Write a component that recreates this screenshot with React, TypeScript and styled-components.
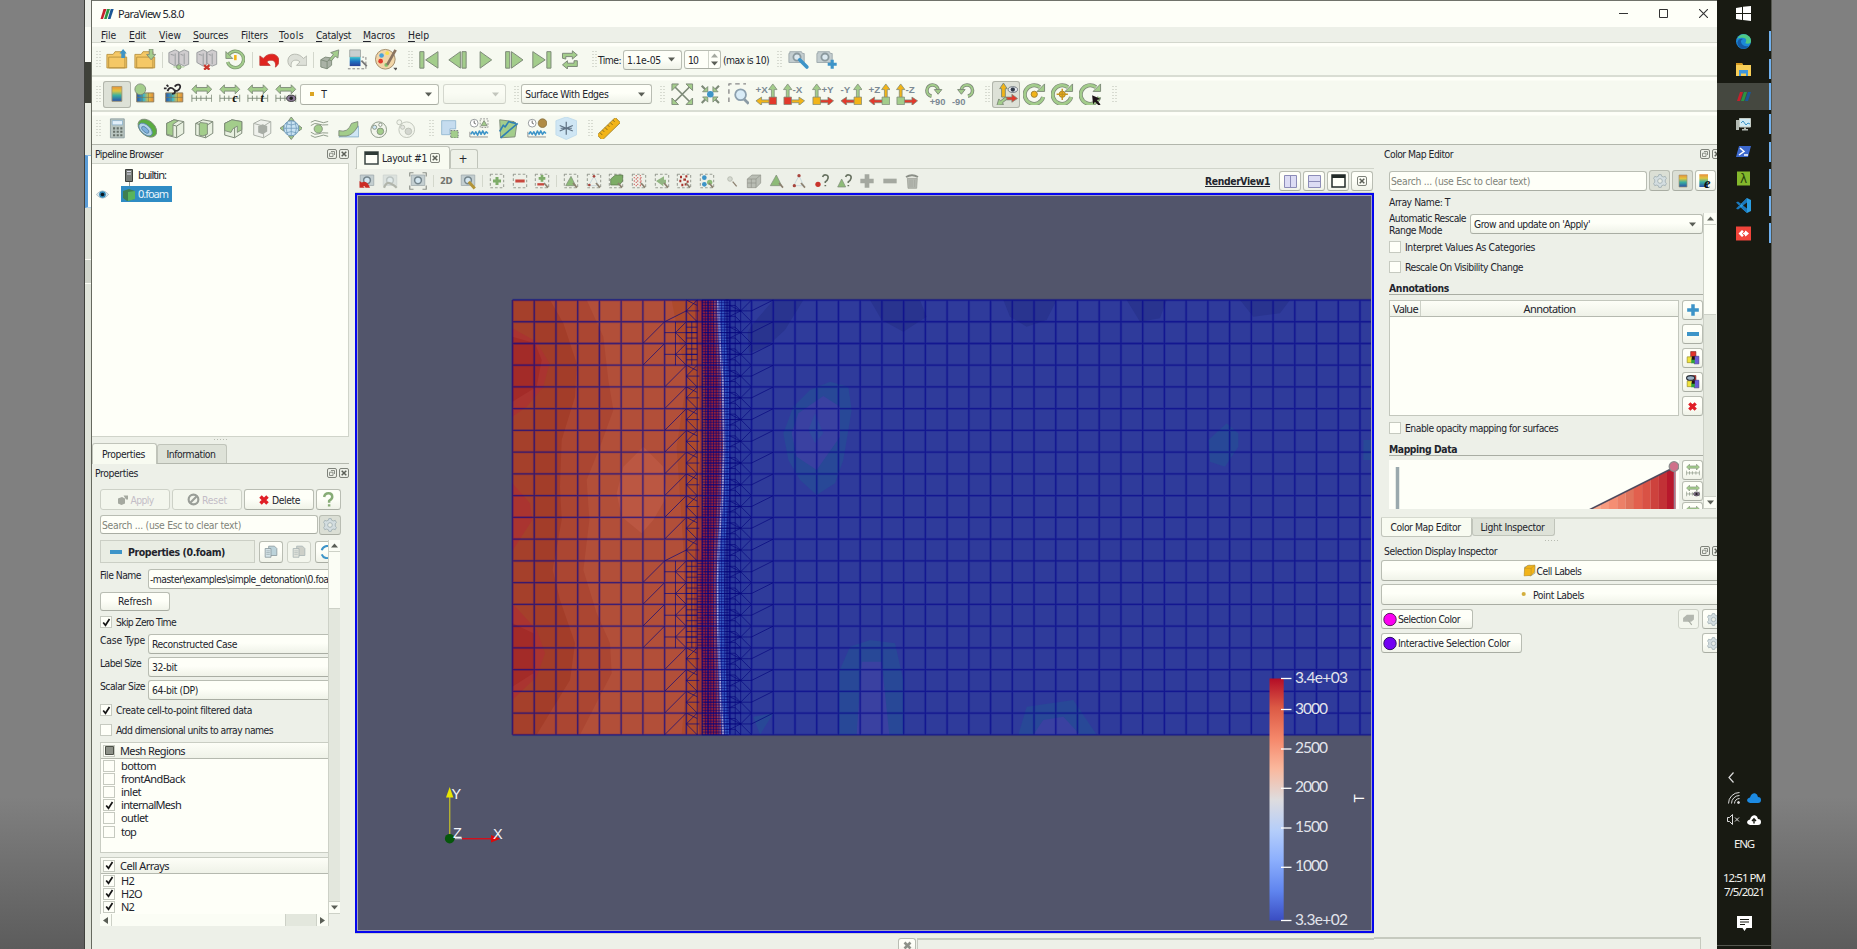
import React, { useLayoutEffect, useRef } from 'react';
import styled, { createGlobalStyle, css } from 'styled-components';

const ui = `"DejaVu Sans Condensed", "DejaVu Sans", "Noto Sans", sans-serif`;
const segoe = `"Noto Sans", "Open Sans", sans-serif`;
const G = '#a3cd8b';
const S = '#7d8a78';
const B = '#3d94c8';
const RED = '#e23a2c';
const YEL = '#f2b418';

const Global = createGlobalStyle`
  * { box-sizing: border-box; }
  html, body { margin: 0; overflow: hidden; background: #808080; }
  svg { display: block; flex: none; }
`;

/* ---------- text ---------- */
const TextSpan = styled.span<{ $bold?: boolean; $color?: string; $size?: number; $segoe?: boolean; $under?: boolean }>`
  display: inline-block;
  flex: none;
  white-space: pre;
  font-family: ${p => (p.$segoe ? segoe : ui)};
  font-size: ${p => p.$size ?? 10.3}px;
  line-height: 12px;
  font-weight: ${p => (p.$bold ? 700 : 400)};
  color: ${p => p.$color ?? '#22242c'};
  text-decoration: ${p => (p.$under ? 'underline' : 'none')};
`;

type TextProps = { w?: number; bold?: boolean; color?: string; size?: number; segoe?: boolean; under?: boolean; children: React.ReactNode };
/* Label whose tracking is adjusted so that it spans the given width. */
function Text({ w, bold, color, size, segoe: sg, under, children }: TextProps) {
  const ref = useRef<HTMLSpanElement>(null);
  useLayoutEffect(() => {
    const el = ref.current;
    if (!el || !w) return;
    el.style.letterSpacing = '0px';
    const n = (el.textContent ?? '').length;
    el.style.letterSpacing = `${(w - el.getBoundingClientRect().width) / n}px`;
  }, [w]);
  return <TextSpan ref={ref} $bold={bold} $color={color} $size={size} $segoe={sg} $under={under}>{children}</TextSpan>;
}

/* ---------- shell ---------- */
const Desktop = styled.div`
  display: grid;
  grid-template-columns: 85px 7px 1625px 55px 85px;
  width: 1857px;
  height: 949px;
  overflow: hidden;
`;
const SideBand = styled.div<{ $left?: boolean }>`
  background: linear-gradient(#808080 0, #808080 84%, #5c5c5c 100%);
  ${p => p.$left ? 'border-right: 1px solid #3f403c;' : ''}
`;
const Behind = styled.div`
  display: flex;
  flex-direction: column;
  background: #dfe3d9;
  border-right: 1px solid #66695f;
`;
const BehindPart = styled.div<{ $h: number; $c: string; $blue?: boolean }>`
  height: ${p => p.$h}px;
  flex: none;
  background: ${p => p.$c};
  ${p => p.$blue ? 'border-left: 3px solid #5a9bd5; border-bottom: 1px solid #b5d5ee; border-top: 1px solid #8fbde6;' : ''}
`;
const Win = styled.div`
  display: flex;
  flex-direction: column;
  min-width: 0;
  overflow: hidden;
  background: #edf0e8;
  border-top: 1px solid #70736b;
`;
const TitleBar = styled.div`
  height: 26px;
  flex: none;
  display: flex;
  align-items: center;
  padding: 0 9px 1px 8px;
  background: #fefff8;
  gap: 4px;
`;
const WinButtons = styled.div`
  margin-left: auto;
  display: flex;
  gap: 31px;
`;
const MenuBar = styled.div`
  height: 16px;
  flex: none;
  display: flex;
  align-items: center;
  padding: 0 0 1px 9px;
  border-bottom: 1px solid #d3d7cd;
`;
const MenuItem = styled.div<{ $w: number }>`
  width: ${p => p.$w}px;
  height: 12px;
  line-height: 12px;
  flex: none;
  u { text-underline-offset: 2px; }
`;
const ToolBar = styled.div<{ $h: number; $last?: boolean }>`
  height: ${p => p.$h}px;
  flex: none;
  display: flex;
  align-items: center;
  background: linear-gradient(#fefff8 0 2px, #f6f9f0 3px);
  border-top: 1px solid #fdfef7;
  border-bottom: ${p => (p.$last ? '1px solid #b2b6ac' : '2px solid #d9ddd3')};
`;
const Slot = styled.div<{ $w: number; $on?: boolean }>`
  width: ${p => p.$w}px;
  height: 27px;
  flex: none;
  display: flex;
  align-items: center;
  justify-content: center;
  ${p => p.$on && css`background: #dde1d7; box-shadow: inset 0 0 0 1px #b1b5ab; border-radius: 3px;`}
`;
const GripBox = styled.div<{ $w: number; $pad: number }>`
  width: ${p => p.$w}px;
  padding-left: ${p => p.$pad}px;
  flex: none;
`;
const Sep = styled.div<{ $w: number; $h?: number }>`
  width: ${p => p.$w}px;
  height: ${p => p.$h ?? 16}px;
  flex: none;
  background: linear-gradient(#d3d7cc, #d3d7cc) center / 1px 100% no-repeat;
`;
const Gap = styled.div<{ $w: number }>`
  width: ${p => p.$w}px;
  flex: none;
`;
const frame = css`
  border: 1px solid #b9bdb3;
  border-bottom-color: #a9ada3;
  border-radius: 3px;
`;
const Combo = styled.div<{ $w: number; $h?: number; $off?: boolean; $flat?: boolean }>`
  ${frame}
  width: ${p => p.$w}px;
  height: ${p => p.$h ?? 20}px;
  flex: none;
  display: flex;
  align-items: center;
  padding: 0 6px 0 3px;
  overflow: hidden;
  background: ${p => (p.$flat ? '#fefff8' : 'linear-gradient(#fefff8 45%, #eff2e8)')};
  opacity: ${p => (p.$off ? 0.55 : 1)};
  > svg:last-child { margin-left: auto; }
`;
const Spin = styled.div`
  ${frame}
  width: 37px;
  height: 19px;
  display: flex;
  align-items: center;
  padding-left: 3px;
  background: #fefff8;
`;
const SpinArrows = styled.div`
  margin-left: auto;
  width: 12px;
  height: 17px;
  display: flex;
  flex-direction: column;
  justify-content: center;
  align-items: center;
  gap: 3px;
  border-left: 1px solid #d0d4ca;
`;

/* ---------- icons ---------- */
const Ico = ({ s = 22, children }: { s?: number; children: React.ReactNode }) => {
  const size = s >= 22 ? s * 0.9 : s;
  return <svg width={size} height={size} viewBox="0 0 24 24" fill="none" strokeLinejoin="round">{children}</svg>;
};
const Down = ({ c = '#5a5e56' }) => <svg width="7" height="5" viewBox="0 0 7 5"><path d="M0 .5h7L3.500 4.500z" fill={c} /></svg>;
const Up = ({ c = '#5a5e56' }) => <svg width="7" height="5" viewBox="0 0 7 5"><path d="M0 4.500h7L3.500.5z" fill={c} /></svg>;
function Grip({ w = 15, pad = 8 }: { w?: number; pad?: number }) {
  return (
    <GripBox $w={w} $pad={pad}>
      <svg width="5" height="17" viewBox="0 0 5 17"><path d="M1 0v17M4 0v17" stroke="#b9bdb2" strokeDasharray="1 2" /></svg>
    </GripBox>
  );
}
const Logo = ({ s = 14 }) => (
  <svg width={s} height={s} viewBox="0 0 14 14">
    <path d="M3.500 2h3L3 12H.5z" fill="#c4202c" /><path d="M7 2h3L6.700 12H4.100z" fill="#2c9440" /><path d="M10.700 2h3L10.500 12H7.800z" fill="#1b5796" />
  </svg>
);
const folder = <path d="M1 6h7l2-3h11v18H1z M3 9h20v12H3z" fill="#f5c866" stroke="#b8923e" />;
const FolderOpen = () => <Ico s={24}>{folder}<path d="M19 0l4 5h-2v5h-4V5h-2z" fill={B} /></Ico>;
const FolderSave = () => <Ico s={24}>{folder}<path d="M19 12l-5-6h3V0h4v6h3z" fill={G} stroke={S} /></Ico>;
const server = <><path d="M1 4l7-3 4 2v14l-4 2-7-4zM12 4l6-3 5 2v14l-5 2-6-3z" fill="#cfccce" stroke="#94979a" /><path d="M8 5v13M18 5v12M3 6l4 1M14 6l3 1" stroke="#94979a" /></>;
const Server = ({ off }: { off?: boolean }) => <Ico s={24}>{server}{off ? <path d="M9 18l6 5M15 18l-6 5" stroke="#c9382e" strokeWidth="2.500" /> : <><path d="M6 20h12" stroke={G} /><circle cx="12" cy="20" r="2.500" fill={G} stroke={S} /></>}</Ico>;
const History = () => <Ico s={23}><path d="M4 7a9.500 9.500 0 1 1-1 8" stroke="#7f9a72" strokeWidth="4" /><path d="M4 7a9.500 9.500 0 1 1-1 8" stroke={G} strokeWidth="2" /><path d="M1 3v8h8z" fill={G} stroke={S} /><path d="M12 7v6" stroke={YEL} strokeWidth="3" /></Ico>;
const Undo = ({ gray }: { gray?: boolean }) => (
  <Ico s={23}><g transform={gray ? 'matrix(-1 0 0 1 24 0)' : undefined}><path d="M1 19V8l4 3c5-7 17-7 18 2 0 4-1 6-4 8 1-5-1-8-5-8-2 0-3 0-5 2l4 4z" fill={gray ? '#dde0d8' : '#e0241f'} stroke={gray ? '#b1b5ab' : '#c33a35'} /></g></Ico>
);
const cubeSmall = <path d="M2 12l5-3 7 1v8l-5 4-7-2zM2 12l7 2v8M9 14l5-4" fill="#aab2a6" stroke={S} />;
const Extract = () => <Ico s={24}>{cubeSmall}<path d="M11 12l5-6-3-2 9-3-1 9-3-2-4 5z" fill={G} stroke={S} /></Ico>;
const Gradient = () => (
  <Ico s={24}>
    <defs><linearGradient id="gr" x2="0" y2="1"><stop stopColor="#3ac2cf" /><stop offset=".5" stopColor="#1d6fc0" /><stop offset="1" stopColor="#283f97" /></linearGradient></defs>
    <path d="M3 1h12v8H3z" fill="#c8cfd0" stroke="#a0a8a4" /><path d="M3 9h12v10H3z" fill="url(#gr)" /><path d="M1 22h20V9h-4" stroke="#777" strokeDasharray="3 2" /><path d="M16 13l6 6" stroke="#777" strokeWidth="2" />
  </Ico>
);
const Palette = () => <Ico s={25}><circle cx="11" cy="12" r="10.500" fill="#f2d6a8" stroke="#a08a68" /><circle cx="7" cy="8" r="2.500" fill="#4aa3d8" /><circle cx="6" cy="14" r="2.500" fill={RED} /><circle cx="13" cy="5.500" r="2" fill="#f6e04b" /><circle cx="12" cy="18" r="2" fill="#7fc06a" /><path d="M22 2l-9 16" stroke="#8a7460" strokeWidth="3" /><path d="M19.500 21h5l-2.500 3z" fill="#555" /></Ico>;
const Shape = ({ d, s = 22, fill = G, stroke = S, w = 1.2 }: { d: string; s?: number; fill?: string; stroke?: string; w?: number }) => (
  <Ico s={s}><path d={d} fill={fill} stroke={stroke} strokeWidth={w} /></Ico>
);
const Loop = () => <Shape d="M3 10V4h12V1l6 5-6 5V8H7v3zM21 13v7H9v3l-6-5 6-5v3h8v-3z" />;
const Camera = ({ kind }: { kind?: 'w' | 'p' }) => (
  <Ico s={24}><path d="M2 3h13l1 2h2v10H1V5h1z" fill="#c3cdcf" stroke="#9da8ab" /><circle cx="10" cy="9" r="4" fill="#dce9f0" stroke="#8b999e" strokeWidth="2" />
    {kind === 'w' ? <path d="M13 12l8 8" stroke={B} strokeWidth="4" strokeLinecap="round" /> : <path d="M18 12v10M13 17h10" stroke={B} strokeWidth="3.500" />}</Ico>
);
const rainbow = <linearGradient id="rb" x2="0" y2="1"><stop stopColor="#e8903a" /><stop offset=".3" stopColor="#dfc63f" /><stop offset=".6" stopColor="#3ab0a0" /><stop offset="1" stopColor="#2a4fa8" /></linearGradient>;
const ColorLegend = ({ s = 22 }) => <Ico s={s}><defs>{rainbow}</defs><path d="M6 3h12v18H6z" fill="url(#rb)" stroke="#a0946f" /></Ico>;
const EditMap = ({ link }: { link?: boolean }) => (
  <Ico s={24}><defs>{rainbow}<linearGradient id="rh"><stop stopColor="#2a53a4" /><stop offset=".4" stopColor="#3cb4c8" /><stop offset=".7" stopColor="#e6c044" /><stop offset="1" stopColor="#dc8638" /></linearGradient></defs>
    <path d="M3 11h19v10H3z" fill="url(#rh)" stroke="#8b7d5c" /><path d="M9 11v10M16 11v10M3 16h19" stroke="#7d764f" strokeWidth=".7" />
    {link ? <path d="M5 9c2-5 5-4 7-2s2 5-2 5M13 4c3-4 7-2 6 1s-4 5-6 3M4 2l2 2M1 6h3" stroke="#2c2a2e" strokeWidth="2" /> : <circle cx="7" cy="7" r="6" fill={G} stroke={S} />}</Ico>
);
const Rescale = ({ mark, s = 24 }: { mark?: string; s?: number }) => (
  <Ico s={s}><path d="M1 7l5-5v3h12V2l5 5-5 5V9H6v3z" fill={G} stroke={S} /><path d="M1 13v8M1 17h22M6 14v6M11 14v6M17 14v6M23 13v8" stroke={S} />
    {mark === 'eye' ? <><ellipse cx="18" cy="17" rx="5" ry="3.500" fill="#8d7a99" stroke="#333" /><circle cx="18" cy="17" r="2" fill="#222" /></> : mark && <text x="15" y="21" fontFamily="Liberation Serif, serif" fontWeight="700" fontStyle="italic" fontSize="13" fill="#111">{mark}</text>}</Ico>
);
const Calc = () => <Ico s={23}><path d="M4 1h16v22H4z" fill="#b9c5c0" stroke="#8c9ca0" /><path d="M6 3h12v5H6z" fill="#e3f0fa" stroke="#8fb4cc" /><path d="M7 12h11M7 16h11M7 20h11" stroke="#66706a" strokeWidth="2.500" strokeDasharray="2.500 1.700" /></Ico>;
const Contour = () => <Ico s={24}><g transform="rotate(42 12 12)"><ellipse cx="12" cy="11" rx="12" ry="8" fill="#5aac40" stroke={S} /><ellipse cx="11.500" cy="13.500" rx="9" ry="5" fill="#b3d3e6" stroke="#5c88ac" /><ellipse cx="11.500" cy="14" rx="5" ry="2.400" fill="#7fb0dc" stroke="#5c88ac" /></g></Ico>;
const Cube = ({ k = 0, s = 24 }: { k?: number; s?: number }) => (
  <Ico s={s}>
    <path d="M3 6l8-4 11 2v13l-8 5-11-3zM3 6l11 3v13M14 9l8-5" fill={k === 3 ? '#eff1ec' : '#e8f0e0'} stroke={k === 3 ? '#abb0a8' : S} strokeWidth="1.100" />
    {k === 0 && <path d="M3 6l8-4 5 1-6 4v13l-7-2z" fill={G} stroke={S} />}
    {k === 1 && <path d="M8 5l8 1v12l-5 2-4-1V7z" fill={G} stroke={S} />}
    {k === 2 && <path d="M3 6l8-4 11 2v9l-5 3v-7l-5 3-2 4-7-2z" fill={G} stroke={S} />}
    {k === 3 && <path d="M8 9l5-2 5 2v6l-5 3-5-2z" fill="#a8ada6" />}
    {k === 4 && <path d="M3 8l5-5 14-1-1 13-6 6-13 1zM3 8l12 0v13M15 8l7-6" fill={YEL} stroke="#b8902e" />}
  </Ico>
);
const Glyph = () => <Ico s={25}><path d="M12 0l3 4H9zM12 24l3-4H9zM0 12l4-3v6zM24 12l-4-3v6z" fill={G} stroke={S} /><circle cx="12" cy="12" r="8" fill="#c8e2f2" stroke="#6c98b8" /><path d="M4 12h16M12 4v16M6 7q6 3 12 0M6 17q6-3 12 0M8 5q-3 7 0 14M16 5q3 7 0 14" stroke="#6c98b8" strokeWidth=".8" /></Ico>;
const Stream = () => <Ico s={22}><path d="M1 4q5-4 10-1t11 0M1 8q5-4 9-2t12 1M1 20q5 4 10 1t11 0M1 16q5 4 9 2t12-1" stroke={S} /><circle cx="10" cy="12" r="5" fill={G} stroke={S} /></Ico>;
const Warp = () => <Ico s={24}><path d="M1 21h22V9l-8 8z" fill="#cfe6f4" stroke="#8ab0c8" /><path d="M1 14q10 3 14-8l7-2v5q-5 10-13 11H1z" fill={G} stroke={S} /></Ico>;
const Group = ({ off }: { off?: boolean }) => <Ico s={22}><circle cx="13" cy="13" r="9.500" stroke={off ? '#b9bdb3' : S} fill="#f2f5ec" /><circle cx="8" cy="10" r="2.500" fill={off ? '#e3e5df' : '#cfe6f4'} stroke={off ? '#b9bdb3' : S} /><circle cx="15" cy="15" r="4" fill={off ? '#d3d6cf' : G} stroke={off ? '#b9bdb3' : S} />{off ? <circle cx="4" cy="4" r="3" fill="#f2f5ec" stroke="#b9bdb3" /> : <circle cx="15" cy="7" r="2" fill="#fff" stroke={S} />}</Ico>;
const ExtractSel = () => <Ico s={22}><path d="M2 2h17v10h-7v7H2z" fill="#c5dcef" stroke="#8fb5d0" /><path d="M13 14h9v9h-9z" fill={G} stroke="#667" strokeDasharray="2 1.500" /></Ico>;
const wave = <><path d="M1 16v6h21" stroke="#888" /><path d="M2 19l2-3 2 3 2-3 2 4 2-5 2 4 2-4 2 4 2-3 2 2" stroke={B} strokeWidth="1.800" /></>;
const PlotTime = ({ brown }: { brown?: boolean }) => <Ico s={23}>{wave}<circle cx="6" cy="6" r="4.500" fill="#fff" stroke="#8a8f92" /><path d="M6 3v3l2 1" stroke="#555" />{brown ? <circle cx="18" cy="6" r="5" fill="#b08b45" stroke="#8b7444" /> : <><path d="M13 1h9v10h-9z" stroke="#888" strokeDasharray="2 1.500" /><path d="M17.500 3l3.500 6h-7z" fill={G} stroke={S} /></>}</Ico>;
const PlotLine = () => <Ico s={24}><path d="M3 2l16 2 3 3-2 14-16 1z" fill={G} stroke={S} /><path d="M4 22L23 6M3 15l4-7 2 2 4-6 3 1 5 1" stroke="#2f7fb4" strokeWidth="1.800" /></Ico>;
const Flake = () => <Ico s={25}><path d="M12 0l11 4v15l-11 5-11-5V4z" fill="#cfe6f4" stroke="#c0dcec" /><path d="M12 5v14M5 9l14 6M19 9L5 15M6 12h12" stroke="#5f7284" strokeWidth="1.300" /></Ico>;
const Ruler = () => <Ico s={24}><g transform="rotate(-44 12 12)"><path d="M-2 8h28v8H-2z" fill={YEL} stroke="#a78a38" /><path d="M2 8v4M6 8v3M10 8v4M14 8v3M18 8v4M22 8v3" stroke="#8a6d20" /></g></Ico>;
const ResetCam = () => <Ico s={25}><path d="M4 4l16 16M20 4L4 20" stroke={S} strokeWidth="1.800" /><path d="M1 1h7L1 8zM23 1v7l-7-7zM1 23v-7l7 7zM23 23h-7l7-7z" fill={G} stroke={S} /></Ico>;
const ZoomData = () => <Ico s={23}><path d="M2 2l4 4M22 2l-4 4M2 22l4-4M22 22l-4-4" stroke={S} strokeWidth="2.500" /><path d="M9 3v6H3zM15 3v6h6zM9 21v-6H3zM15 21v-6h6z" fill={G} stroke={S} /><circle cx="12" cy="12" r="3.800" fill={B} /></Ico>;
const ZoomBox = () => <Ico s={24}><path d="M1 21V1h19" stroke="#888" strokeWidth="1.500" strokeDasharray="5 4" /><path d="M18 18l5 5" stroke="#8a9aa4" strokeWidth="3" /><circle cx="14" cy="13" r="6" fill="#d9ecf7" stroke="#8ca0ae" strokeWidth="2" /></Ico>;
const upArrow = (x: number, c: string) => <path d={`M${x - 1.5} 18V7h-3l4.500-6 4.500 6h-3v11z`} fill={c} stroke={S} strokeWidth=".8" />;
function AxisView({ t, flip, up, side, box }: { t: string; flip?: boolean; up: string; side: string; box: string }) {
  const x = flip ? 5 : 19;
  return (
    <Ico s={25}>
      {upArrow(x, up)}
      <path d={flip ? 'M8 18h9v-3l6 4-6 5v-3H8z' : 'M16 18H7v-3l-6 4 6 5v-3h9z'} fill={side} stroke={S} strokeWidth=".8" />
      <path d={`M${x - 4} 15h8v8h-8z`} fill={box} stroke={S} strokeWidth=".8" />
      <text x={flip ? 10 : 0.5} y="11" fontFamily="Liberation Sans, sans-serif" fontWeight="700" fontSize="10.500" fill="#7c8a94">{t}</text>
    </Ico>
  );
}
const Rot = ({ t }: { t: string }) => {
  const l = t[0] === '-';
  return <Ico s={25}><g transform={l ? 'matrix(-1 0 0 1 25 0)' : undefined}><path d="M8 14A6 6 0 1 1 15 7" stroke={S} strokeWidth="3.800" /><path d="M8 14A6 6 0 1 1 15 7" stroke={G} strokeWidth="2" /><path d="M11 7h8l-4 5z" fill={G} stroke={S} /></g><text x={l ? 0 : 6} y="23" fontFamily="Liberation Sans, sans-serif" fontWeight="700" fontSize="10" fill="#7c8a94">{t}</text></Ico>;
};
const AxesEye = () => <Ico s={25}><path d="M7 15V6H5l4-6 4 6h-2v9z" fill={YEL} stroke={S} /><path d="M11 15h7v-3l6 4.500-6 4V18h-7z" fill={RED} stroke={S} strokeWidth=".8" /><path d="M11 15l-5 4-2-2-2 7 7-1-1-2 5-4z" fill={G} stroke={S} /><ellipse cx="19" cy="7" rx="5" ry="3" fill="#e5e9ee" stroke="#66707a" /><circle cx="19" cy="7" r="2.300" fill="#2f3a48" /></Ico>;
const Center = ({ k }: { k: number }) => <Ico s={25}><path d="M21.500 15A10 10 0 1 1 18 4.500" stroke={S} strokeWidth="4.400" /><path d="M21.500 15A10 10 0 1 1 18 4.500" stroke={G} strokeWidth="2.800" /><path d="M15 9h8V1z" fill={G} stroke={S} />{k < 2 && <circle cx="12" cy="12" r="3.300" fill={YEL} stroke="#a08030" />}{k === 1 && <path d="M12 6v12M6 12h12" stroke="#c69420" strokeWidth="1.500" />}{k === 2 && <path d="M14 13l9 4-4 1 4 5-2 1-4-4-2 3z" fill="#1e1418" />}</Ico>;

const dash = <path d="M2 2h20v20H2z" stroke="#9a9e95" strokeWidth="1.600" strokeDasharray="4 3" />;
const hand = <path d="M15 15l6 7" stroke="#8c8170" strokeWidth="2.500" />;
function Sel({ k }: { k: string }) {
  return (
    <Ico s={16}>
      {'abcdefghijk'.includes(k) && dash}
      {k === 'a' && <path d="M12 6v12M6 12h12" stroke="#7eac69" strokeWidth="4.500" />}
      {k === 'b' && <path d="M5 12h14" stroke="#c8483e" strokeWidth="4.500" />}
      {k === 'c' && <><path d="M12 3v10M7 8h10" stroke="#7eac69" strokeWidth="4" /><path d="M5 17h10" stroke="#c8483e" strokeWidth="3.500" />{hand}</>}
      {k === 'd' && <><path d="M12 5l7 14H4z" fill="#8dbb77" stroke={S} />{hand}</>}
      {k === 'e' && <><path d="M12 5l7 14H4z" stroke="#b7cbd4" /><circle cx="12" cy="5" r="2" fill="#a8443c" /><circle cx="5" cy="18" r="2" fill="#a8443c" />{hand}</>}
      {k === 'f' && <><path d="M4 9l7-6h11v9l-5 6H4z" fill="#7dad66" stroke="#58734a" />{hand}</>}
      {k === 'g' && <><path d="M4 7h14M4 12h14M4 17h14M8 3v18M14 3v18" stroke="#d57c78" strokeDasharray="2 3" strokeWidth="2" />{hand}</>}
      {k === 'h' && <><path d="M3 12L15 5v5h3v6h-4v4z" fill="#92b682" />{hand}</>}
      {k === 'i' && <><path d="M6 6h3M14 5h3M5 12h3M11 10h4M16 13h3M8 18h3M13 17h3" stroke="#a8342e" strokeWidth="3.500" />{hand}</>}
      {k === 'j' && <><circle cx="8" cy="7" r="3.500" fill={B} /><circle cx="8" cy="17" r="3.500" fill={B} /><circle cx="16" cy="14" r="4" fill="#8dbb77" />{hand}</>}
      {k === 'l' && <><circle cx="9" cy="9" r="3.500" fill="#d5d9d0" stroke="#a9ada3" /><path d="M13 13l6 7" stroke="#8c8170" strokeWidth="2" /></>}
      {k === 'm' && <path d="M2 9l7-6h13v12l-7 7H2zM2 9h13v13M15 9l7-6M8 9v13M2 15h13" fill="#b9bdb4" stroke="#8f938a" />}
      {k === 'n' && <><path d="M11 3l8 16H2z" fill="#8dbb77" stroke={S} />{hand}</>}
      {k === 'o' && <><path d="M12 4l7 15H4z" stroke="#b7cbd4" /><circle cx="12" cy="4" r="2.500" fill="#a8443c" /><circle cx="5" cy="19" r="2.500" fill="#a8443c" />{hand}</>}
      {k === 'p' && <><circle cx="6" cy="17" r="4" fill="#c9342c" /><path d="M13 6q1-4 5-3t3 5-4 5v2M17 18v2" stroke="#66705f" strokeWidth="2.500" /></>}
      {k === 'q' && <><path d="M7 9l6 12H1z" fill="#8dbb77" stroke={S} /><path d="M13 6q1-4 5-3t3 5-4 5v2M17 18v2" stroke="#66705f" strokeWidth="2.500" /></>}
      {k === 'r' && <path d="M12 2v20M2 12h20" stroke="#a4a8a0" strokeWidth="7" />}
      {k === 's' && <path d="M2 12h20" stroke="#a4a8a0" strokeWidth="7" />}
      {k === 't' && <><path d="M5 8h15l-1 15H6z" fill="#b4b8b0" stroke="#989c93" /><path d="M9 10v11M12 10v11M16 10v11" stroke="#a0a49b" /><path d="M3 6q9-5 18 0" stroke="#8a8e86" strokeWidth="3" /></>}
    </Ico>
  );
}
const CamSmall = ({ k }: { k: number }) => (
  <Ico s={18}>{k === 2 && <path d="M1 6V1h5M18 1h5v5M23 18v5h-5M6 23H1v-5" stroke="#8d918a" strokeWidth="1.600" />}
    <g opacity={k === 1 ? 0.4 : 1}><path d="M3 4h18v14H3z" fill="#c3ced0" stroke="#9da8ab" /><circle cx="12" cy="11" r="4.500" fill="#d4e6f0" stroke="#75858c" strokeWidth="2" /></g>
    {k === 0 && <path d="M2 21v-9l3 2q7-4 11 7h-6q-1-3-3-2l2 2z" fill="#cc2c26" />}{k === 1 && <path d="M4 21q3-8 8-6t9 6" stroke="#b1b5ab" strokeWidth="3" />}{k === 3 && <path d="M13 13l8 9" stroke="#b39438" strokeWidth="4" />}</Ico>
);
const FloatIcon = () => <svg width="10" height="10" viewBox="0 0 10 10" fill="none"><rect x=".5" y=".5" width="9" height="9" rx="1.500" stroke="#7e827a" /><path d="M4 2.500h3.500V6M2.500 4.200H6V7.500H2.500z" stroke="#8c9088" /></svg>;
const CloseIcon = () => <svg width="10" height="10" viewBox="0 0 10 10" fill="none"><rect x=".5" y=".5" width="9" height="9" rx="1.500" stroke="#7e827a" /><path d="M2.700 2.700l4.600 4.600M7.300 2.700L2.700 7.300" stroke="#5c6058" strokeWidth="1.500" /></svg>;
const Gear = ({ s = 14 }) => <Ico s={s}><path d="M10 1h4l1 3 3 1 3-1 2 4-2 2v4l2 2-2 4-3-1-3 1-1 3h-4l-1-3-3-1-3 1-2-4 2-2v-4L1 8l2-4 3 1 3-1z" fill="#d3dde0" stroke="#a3b1b5" strokeWidth="1.500" /><circle cx="12" cy="12" r="4" fill="#e9ede5" stroke="#a3b1b5" strokeWidth="1.500" /></Ico>;
const RedX = ({ s = 12 }) => <Ico s={s}><path d="M5 5l14 14M19 5L5 19" stroke="#e01f26" strokeWidth="7" /></Ico>;
const Eye = () => <svg width="13" height="9" viewBox="0 0 13 9"><path d="M.3 4.500Q6.500-3 12.700 4.500 6.500 12 .3 4.500z" fill="#d7e4ea" stroke="#9fb0b8" strokeWidth=".6" /><circle cx="6.500" cy="4.500" r="3.300" fill="#2c84b4" /><circle cx="6.500" cy="4.500" r="1.800" fill="#0c1820" /></svg>;
const Swatches = ({ eye }: { eye?: boolean }) => <Ico s={14}><path d="M8 1h9v9H8z" fill="#e3342c" stroke="#6e2422" /><path d="M2 10h9v10H2z" fill="#f0e33c" stroke="#857c20" /><path d="M14 9h8v13h-8z" fill="#6a5cd8" stroke="#37307e" /><path d="M9 13h6v8H9z" fill="#2fa33c" /><path d="M10 9h5v6h-5z" fill="#241014" />{eye && <ellipse cx="8" cy="5" rx="7" ry="4" fill="#9ab0c4" stroke="#2a3038" strokeWidth="2" />}</Ico>;
const Copy = ({ dim }: { dim?: boolean }) => <Ico s={14}><g opacity={dim ? 0.7 : 1}><path d="M8 2h10l4 4v12H8z" fill={dim ? '#bdc1b9' : '#bcd3da'} stroke="#8a999d" strokeWidth="1.400" /><path d="M2 6h10v15H2z" fill={dim ? '#d8dbd4' : '#d5e4e8'} stroke="#8a999d" strokeWidth="1.400" /><path d="M4 10h6M4 13h6M4 16h6" stroke="#8a999d" /></g></Ico>;

/* ---------- generic panel parts ---------- */
const Body = styled.div`
  flex: 1;
  display: grid;
  grid-template-columns: 263px 1019px 343px;
  min-height: 0;
`;
const Col = styled.div<{ $pl?: number }>`
  display: flex;
  flex-direction: column;
  min-width: 0;
  min-height: 0;
  overflow: hidden;
  padding-left: ${p => p.$pl ?? 0}px;
`;
const Row = styled.div<{ $h: number; $mt?: number; $gap?: number; $pl?: number; $w?: number; $top?: boolean }>`
  display: flex;
  flex: none;
  align-items: ${p => (p.$top ? 'flex-start' : 'center')};
  height: ${p => p.$h}px;
  margin-top: ${p => p.$mt ?? 0}px;
  gap: ${p => p.$gap ?? 0}px;
  padding-left: ${p => p.$pl ?? 0}px;
  ${p => p.$w ? `width: ${p.$w}px;` : ''}
`;
const DockTitle = styled.div<{ $mt?: number; $w: number; $h?: number }>`
  display: flex;
  flex: none;
  align-items: center;
  height: ${p => p.$h ?? 18}px;
  width: ${p => p.$w}px;
  margin-top: ${p => p.$mt ?? 0}px;
  padding-left: 3px;
  gap: 2px;
  > svg:nth-child(2) { margin-left: auto; }
`;
const Tree = styled.div`
  width: 257px;
  height: 274px;
  flex: none;
  background: #fefff8;
  border: 1px solid #d0d4ca;
  border-left: none;
  padding-top: 3px;
`;
const TreeRow = styled.div<{ $h: number }>`
  display: grid;
  grid-template-columns: 29px 1fr;
  align-items: center;
  height: ${p => p.$h}px;
  > svg { margin-left: 4px; }
`;
const Node = styled.div<{ $on?: boolean }>`
  display: flex;
  align-items: center;
  height: 16px;
  width: 51px;
  gap: ${p => (p.$on ? 2 : 5)}px;
  padding-left: ${p => (p.$on ? 1 : 4)}px;
  background: ${p => (p.$on ? '#2f8cc4' : 'transparent')};
`;
const Dots = styled.div<{ $h: number; $pl: number }>`
  height: ${p => p.$h}px;
  flex: none;
  padding-left: ${p => p.$pl}px;
  &::after { content: ''; display: block; width: 15px; height: 1px; margin-top: 2px; background: repeating-linear-gradient(90deg, #b8bcb2 0 1px, transparent 1px 3px); }
`;
const Tabs = styled.div<{ $bottom?: boolean }>`
  display: flex;
  flex: none;
  height: 21px;
  align-items: ${p => (p.$bottom ? 'flex-start' : 'flex-end')};
  ${p => p.$bottom ? 'border-top: 2px solid #d5d9cf; width: 336px;' : 'border-bottom: 1px solid #b4b8ae; width: 257px;'}
`;
const Tab = styled.div<{ $w: number; $h: number; $on?: boolean; $down?: boolean }>`
  width: ${p => p.$w}px;
  height: ${p => p.$h}px;
  flex: none;
  display: flex;
  align-items: center;
  justify-content: center;
  gap: 3px;
  padding-right: 2px;
  background: ${p => (p.$on ? '#f8fbf1' : '#dee2d8')};
  border: 1px solid #c0c4ba;
  ${p => p.$down ? 'border-top: none; border-radius: 0 0 3px 3px;' : 'border-bottom: none; border-radius: 3px 3px 0 0;'}
  ${p => p.$on ? `margin-${p.$down ? 'top' : 'bottom'}: -1px;` : ''}
`;
const Button = styled.div<{ $w: number; $h?: number; $off?: boolean; $pressed?: boolean; $left?: boolean; $tight?: boolean }>`
  ${frame}
  width: ${p => p.$w}px;
  height: ${p => p.$h ?? 20}px;
  flex: none;
  display: flex;
  align-items: center;
  justify-content: ${p => (p.$left ? 'flex-start' : 'center')};
  gap: ${p => (p.$left || p.$tight ? 1 : 2)}px;
  padding-left: ${p => (p.$left ? 1 : 0)}px;
  overflow: hidden;
  background: ${p => (p.$pressed ? '#dbdfd5' : 'linear-gradient(#fefff8 45%, #f0f3e9)')};
  ${p => p.$off ? 'border-color: #cdd1c7; background: #f3f6ed;' : ''}
`;
const Input = styled.div<{ $w: number; $h?: number }>`
  ${frame}
  width: ${p => p.$w}px;
  height: ${p => p.$h ?? 19}px;
  flex: none;
  display: flex;
  align-items: center;
  padding-left: 1px;
  overflow: hidden;
  background: #fefff8;
`;
const CheckBox = styled.div<{ $s?: number }>`
  width: ${p => p.$s ?? 12}px;
  height: ${p => p.$s ?? 12}px;
  flex: none;
  display: flex;
  align-items: center;
  justify-content: center;
  background: #fefff8;
  border: 1px solid #c6cac0;
`;
const Tick = () => <svg width="9" height="9" viewBox="0 0 9 9"><path d="M1.200 4.500L3.500 7.300 7.500 1" fill="none" stroke="#151515" strokeWidth="1.700" /></svg>;
const Mixed = () => <svg width="9" height="9" viewBox="0 0 9 9"><path d="M.5.5h8v8h-8z" fill="#8d9188" stroke="#4d5148" /></svg>;
function Check({ on, mixed, label, w, gap = 4, sg }: { on?: boolean; mixed?: boolean; label: string; w: number; gap?: number; sg?: boolean }) {
  return <><CheckBox>{on ? <Tick /> : mixed ? <Mixed /> : null}</CheckBox><Gap $w={gap} /><Text w={w} segoe={sg} size={sg ? 11 : undefined}>{label}</Text></>;
}
const ScrollPair = styled.div<{ $w: number; $h: number; $bar: number }>`
  display: grid;
  grid-template-columns: 1fr ${p => p.$bar}px;
  width: ${p => p.$w}px;
  height: ${p => p.$h}px;
  flex: none;
`;
const ScrollBody = styled.div`
  display: flex;
  flex-direction: column;
  overflow: hidden;
  min-width: 0;
  min-height: 0;
`;
const VScroll = styled.div<{ $thumb: number }>`
  display: grid;
  grid-template-rows: 12px ${p => p.$thumb}px 1fr 12px;
  background: #e3e7dd;
  border-left: 1px solid #cdd1c7;
  > div { background: #fbfdf5; border-bottom: 1px solid #cdd1c7; display: flex; align-items: center; justify-content: center; }
  > div:nth-child(3) { background: transparent; }
`;
const HScroll = styled.div`
  display: grid;
  grid-template-columns: 12px 174px 1fr 12px;
  width: 229px;
  height: 12px;
  flex: none;
  background: #e3e7dd;
  > div { background: #fbfdf5; border-right: 1px solid #cdd1c7; display: flex; align-items: center; justify-content: center; }
  > div:nth-child(3) { background: transparent; }
`;
const GroupHead = styled.div`
  width: 155px;
  height: 23px;
  flex: none;
  display: flex;
  align-items: center;
  gap: 6px;
  padding-left: 9px;
  border: 1px solid #cbcfc5;
  background: #e9ede3;
`;
const Bar = styled.div<{ $w: number; $h: number; $c: string }>`
  width: ${p => p.$w}px;
  height: ${p => p.$h}px;
  flex: none;
  background: ${p => p.$c};
`;
const List = styled.div<{ $h: number; $mt: number }>`
  height: ${p => p.$h}px;
  margin-top: ${p => p.$mt}px;
  width: 260px;
  flex: none;
  background: #fefff8;
  border: 1px solid #c9cdc3;
`;
const ListHead = styled.div`
  height: 16px;
  display: flex;
  align-items: center;
  padding-left: 2px;
  background: linear-gradient(#fdfef7, #eff2e8);
  border-bottom: 1px solid #b5b9af;
`;
const ListItem = styled.div`
  height: 13.2px;
  display: flex;
  align-items: center;
  padding-left: 2px;
`;

/* ---------- left column ---------- */
const regions: [string, number, boolean][] = [['bottom', 35, false], ['frontAndBack', 64, false], ['inlet', 20, false], ['internalMesh', 60, true], ['outlet', 27, false], ['top', 15, false]];
function LeftColumn() {
  return (
    <Col>
      <DockTitle $w={257} $h={18}><Text w={68}>Pipeline Browser</Text><FloatIcon /><CloseIcon /></DockTitle>
      <Tree>
        <TreeRow $h={14}><span /><Node><svg width="8" height="13" viewBox="0 0 8 13"><path d="M.5.5h7v12h-7z" fill="#787c78" stroke="#3c3f3c" /><path d="M2 2.500h4M2 5h4" stroke="#dde" /></svg><Text w={28} segoe size={11}>builtin:</Text></Node></TreeRow>
        <Row $h={5} $pl={37}><Bar $w={1} $h={4} $c="#9a9e95" /></Row>
        <TreeRow $h={16}><Eye /><Node $on><svg width="14" height="13" viewBox="0 0 14 13"><path d="M1 3l6-2 6 2v8l-8 2-4-3z" fill="#3f7f52" /><path d="M6 4l7-1v8l-7 2z" fill="#59b45c" /></svg><Text w={30} segoe size={11} color="#e9f4fb">0.foam</Text></Node></TreeRow>
      </Tree>
      <Dots $h={6} $pl={122} />
      <Tabs><Tab $w={65} $h={21} $on><Text w={43}>Properties</Text></Tab><Tab $w={70} $h={19}><Text w={49}>Information</Text></Tab></Tabs>
      <DockTitle $w={257} $h={17}><Text w={43}>Properties</Text><FloatIcon /><CloseIcon /></DockTitle>
      <Row $h={21} $mt={8} $pl={8} $gap={2}>
        <Button $w={70} $h={21} $off><Ico s={12}><path d="M2 9l8-3 6 3v10l-7 3-7-3zM13 3h9v8h-4z" fill="#a5a9a0" /></Ico><Text w={23} color="#c3bdc7">Apply</Text></Button>
        <Button $w={70} $h={21} $off><Ico s={13}><circle cx="12" cy="12" r="9" stroke="#9a9e98" strokeWidth="4" /><path d="M6 18L18 6" stroke="#9a9e98" strokeWidth="4" /></Ico><Text w={25} color="#c3bdc7">Reset</Text></Button>
        <Button $w={70} $h={21}><RedX /><Text w={28}>Delete</Text></Button>
        <Button $w={25} $h={21}><Ico s={15}><path d="M5 8q1-6 7-6t6 6q0 3-5 6v3M13 19.500v3.500" stroke="#87ac76" strokeWidth="4" /></Ico></Button>
      </Row>
      <Row $h={19} $mt={5} $pl={8} $gap={1}><Input $w={218}><Text w={139} color="#7f8379">Search ... (use Esc to clear text)</Text></Input><Button $w={22} $h={20} $pressed><Gear /></Button></Row>
      <Row $h={374} $mt={6} $pl={8} $top>
        <ScrollPair $w={240} $h={374} $bar={12}>
          <ScrollBody>
            <Row $h={23} $gap={4}>
              <GroupHead><Bar $w={12} $h={4} $c={B} /><Text w={97} bold size={10.5}>Properties (0.foam)</Text></GroupHead>
              <Button $w={24} $h={22}><Copy /></Button><Button $w={24} $h={22} $off><Copy dim /></Button>
              <Button $w={24} $h={22}><Ico s={14}><path d="M19 4A10 10 0 0 0 3 9M3 16a10 10 0 0 0 16 4" stroke={B} strokeWidth="3.500" /><path d="M14 6h8V0z" fill={B} /></Ico></Button>
            </Row>
            <Row $h={19} $mt={6} $top><Text w={41}>File Name</Text><Gap $w={7} /><Input $w={190} $h={20}><Text w={187}>-master\examples\simple_detonation\0.foam</Text></Input></Row>
            <Row $h={20} $mt={3}><Button $w={70} $h={19}><Text w={34}>Refresh</Text></Button></Row>
            <Row $h={12} $mt={5}><Check on label="Skip Zero Time" w={60} /></Row>
            <Row $h={20} $mt={6} $top><Text w={45}>Case Type</Text><Gap $w={3} /><Combo $w={190}><Text w={85}>Reconstructed Case</Text></Combo></Row>
            <Row $h={20} $mt={3} $top><Text w={41}>Label Size</Text><Gap $w={7} /><Combo $w={190}><Text w={25}>32-bit</Text></Combo></Row>
            <Row $h={20} $mt={3} $top><Text w={45}>Scalar Size</Text><Gap $w={3} /><Combo $w={190}><Text w={46}>64-bit (DP)</Text></Combo></Row>
            <Row $h={12} $mt={4}><Check on label="Create cell-to-point filtered data" w={136} /></Row>
            <Row $h={12} $mt={8}><Check label="Add dimensional units to array names" w={157} /></Row>
            <List $h={111} $mt={6}>
              <ListHead><Check mixed label="Mesh Regions" w={65} gap={5} sg /></ListHead>
              {regions.map(([t, w, on]) => <ListItem key={t}><Check on={on} label={t} w={w} gap={6} sg /></ListItem>)}
            </List>
            <List $h={80} $mt={4}>
              <ListHead><Check on label="Cell Arrays" w={49} gap={5} sg /></ListHead>
              {['H2', 'H2O', 'N2'].map(t => <ListItem key={t}><Check on label={t} w={t.length === 3 ? 21 : 13} gap={6} sg /></ListItem>)}
            </List>
          </ScrollBody>
          <VScroll $thumb={57}><div><Up /></div><div /><div /><div><Down /></div></VScroll>
        </ScrollPair>
      </Row>
      <Row $h={12} $pl={8}><HScroll><div><svg width="5" height="7"><path d="M5 0v7L0 3.500z" fill="#5a5e56" /></svg></div><div /><div /><div><svg width="5" height="7"><path d="M0 0v7l5-3.500z" fill="#5a5e56" /></svg></div></HScroll></Row>
    </Col>
  );
}

/* ---------- render view ---------- */
const C = 21.73;
const X0 = 512.5;
const Y0 = 300;
const R = 21.74;
const gx = (k: number) => X0 + k * C;
const gy = (k: number) => Y0 + k * R;
const finerRow = (r: number) => r === 1 || r === 2 || (r >= 12 && r <= 15);

function coarseGrid() {
  let d = '';
  for (let k = 0; k < 40; k++) d += `M${gx(k)} ${Y0}V${gy(20)}`;
  for (let k = 0; k <= 20; k++) d += `M${X0} ${gy(k)}H1374`;
  return d;
}
function transitions() {
  let d = '';
  for (let r = 0; r < 20; r++) {
    const t = gy(r), m = gy(r + 0.5), b = gy(r + 1);
    d += `M${gx(11)} ${m}L${gx(12)} ${t}M${gx(8.8)} ${m}H${gx(11)}M${gx(10.5)} ${m}L${gx(11)} ${t}M${gx(10.5)} ${m}L${gx(11)} ${b}`;
    if (finerRow(r)) {
      d += `M${gx(6)} ${b}L${gx(7)} ${t}M${gx(7)} ${m}H${gx(8.5)}M${gx(7.5)} ${t}V${b}M${gx(7.5)} ${m}L${gx(8)} ${t}M${gx(7.5)} ${m}L${gx(8)} ${b}`;
      for (let q = 0; q < 4; q++) d += `M${gx(8)} ${gy(r + q / 4)}H${gx(8.5)}`;
      d += `M${gx(8.25)} ${t}V${b}`;
    } else {
      d += r === 0 || r === 11 ? `M${gx(7)} ${b}L${gx(8)} ${m}` : `M${gx(7)} ${b}L${gx(8)} ${t}`;
      d += `M${gx(8)} ${m}H${gx(8.6)}M${gx(8)} ${m}L${gx(8.5)} ${t}M${gx(8)} ${m}L${gx(8.5)} ${b}M${gx(8)} ${t}L${gx(8.5)} ${gy(r + 0.25)}`;
    }
    d += `M${gx(10)} ${gy(r + 0.25)}L${gx(10.5)} ${m}L${gx(10)} ${gy(r + 0.75)}`;
    for (let q = 0; q < 4; q++) d += `M${gx(9.8)} ${gy(r + q / 4)}H${gx(10.25)}l${C / 4} ${q % 2 ? R / 4 : 0}`;
  }
  d += `M${gx(10.5)} ${Y0}V${gy(20)}M${gx(10.25)} ${Y0}V${gy(20)}M${gx(8.5)} ${Y0}V${gy(20)}M${gx(8.72)} ${Y0}V${gy(20)}`;
  return d;
}
function fineGrid() {
  let d = '';
  for (let x = 8.75; x <= 10.01; x += 0.125) d += `M${gx(x)} ${Y0}V${gy(20)}`;
  for (let y = 0; y <= 20; y += 0.125) d += `M${gx(y > 11.9 && y < 16 ? 8.5 : 8.72)} ${gy(y)}H${gx(9.95)}`;
  return d;
}
const shock: [number, number][] = [[716.5, 300], [718, 340], [721, 380], [722.5, 447], [720.5, 500], [717.5, 540], [716, 580], [716.3, 620], [717.5, 660], [719, 700], [721.5, 734.8]];
const band = (a: number, b: number) =>
  'M' + shock.map(([x, y]) => `${x + a} ${y}`).join('L') + 'L' + [...shock].reverse().map(([x, y]) => `${x + b} ${y}`).join('L') + 'z';
const ticks: [string, number][] = [['3.4e+03', 678.5], ['3000', 709.5], ['2500', 749], ['2000', 788.3], ['1500', 828], ['1000', 867.3], ['3.3e+02', 920.5]];

function Mesh() {
  return (
    <svg width="1013" height="734" viewBox="358 196 1013 734">
      <defs>
        <linearGradient id="cool" x2="0" y2="1">
          <stop stopColor="#b40d26" /><stop offset=".12" stopColor="#dc5a45" /><stop offset=".25" stopColor="#f5886b" /><stop offset=".37" stopColor="#fab79c" /><stop offset=".5" stopColor="#dedcde" />
          <stop offset=".63" stopColor="#b4cdfa" /><stop offset=".75" stopColor="#8caffd" /><stop offset=".88" stopColor="#5f84ee" /><stop offset="1" stopColor="#3a4dc2" />
        </linearGradient>
      </defs>
      <path d="M358 196h1014v734H358z" fill="#52556b" />
      <path d={`M${X0} 300h860v434.800h-860z`} fill="#2f3b9b" />
      <g transform="translate(500 280) scale(.33333)">
        <path d="M37 60h613V1364H37z" fill="#b24f39" />
        <path d="M515 60h140V1364H545L560 1200L550 800L530 500L560 300z" fill="#ad4a2c" />
        <path d="M37 60H260L310 170L325 300L340 390L300 500L260 600L268 720L250 870L290 1000L330 1090L335 1180L240 1364H37z" fill="#ab4632" />
        <path d="M37 60H150L190 130L230 250L225 350L185 480L180 620L185 720L158 870L180 960L225 1090L210 1200L110 1364H37z" fill="#a33d29" />
        <path d="M37 60H100V1364H37z" fill="#a5402b" />
        <path d="M37 145L110 185L148 250L130 320L80 380L37 410zM37 610L90 670L97 720L37 812zM37 970L110 1050L135 1120L110 1190L37 1260z" fill="#aa3430" />
        <path d="M37 170L105 190L125 240L110 320L37 365zM37 1030L100 1060V1180L37 1220z" fill="#a32b28" />
        <path d="M430 500L490 560L500 650L460 720L425 760L365 710L350 640L370 560z" fill="#bb5742" />
        <path d="M820 60H910L855 150L800 200L730 225L720 190L760 130zM1110 60H1260L1280 110L1210 155L1145 120zM1510 60h160l-30 60-60 20-50-30z M1880 60h120l-20 55-60 10z M2220 60h150l-30 40-80 10z" fill="#29348f" />
        <path d="M990 305L1045 320L1055 390L1030 540L1005 610L950 645L900 600L865 540L850 460L880 380L930 330zM1110 1080L1185 1090L1210 1200V1364H1015V1180L1050 1100zM1580 1280L1720 1260L1790 1364H1555zM2180 430L2215 460V500L2175 560L2130 545L2125 480zM2590 480h30v60h-30zM760 1310L820 1300L780 1364z" fill="#284897" />
        <path d="M970 348L1020 380L1020 470L950 570L890 530L875 460L895 400zM1085 1145H1145L1168 1364H1070zM1630 1320L1690 1310L1740 1364H1600z" fill="#3a41a1" />
        <path d="M945 400L970 460L945 490L925 450z" fill="#314b9f" />
      </g>
      <path d={band(-9, 30)} fill="#2c3a9c" />
      <path d={band(-22, -9)} fill="#9a3634" />
      <path d={band(-16, -1)} fill="#94203a" />
      <path d={band(3, 8)} fill="#3a5fc6" />
      <path d={band(-3, 0.5)} fill="#9a4560" />
      <path d={band(0.5, 2.8)} fill="#a9a9dc" />
      <path d={coarseGrid()} stroke="#06068c" strokeWidth="1.300" opacity=".62" fill="none" />
      <path d={coarseGrid()} stroke="#06068c" strokeWidth="2.800" opacity=".14" fill="none" />
      <path d={transitions()} stroke="#06067e" strokeWidth=".8" opacity=".85" fill="none" />
      <path d={fineGrid()} stroke="#05057a" strokeWidth=".9" opacity=".68" fill="none" />
      <path d="M1269.500 678.500h14.200v242h-14.200z" fill="url(#cool)" />
      {ticks.map(([t, y]) => (
        <g key={t}><path d={`M1281 ${y}h10.500`} stroke="#fff" strokeWidth="1.300" /><text x="1295" y={y + 4} textLength={t.length > 4 ? 53 : 33} fontFamily="Lato, sans-serif" fontSize="15.500" fill="#e2e4ec">{t}</text></g>
      ))}
      <text transform="translate(1364 802.500) rotate(-90)" fontFamily="Lato, sans-serif" fontSize="14" fill="#fff">T</text>
      <path d="M449.700 838V795" stroke="#b3b032" strokeWidth="1.400" /><path d="M449.700 787l3.700 10.500h-7.400z" fill="#e8e600" />
      <path d="M455 838.700h7" stroke="#c8ccd8" /><path d="M462 838.700h30" stroke="#d0101c" strokeWidth="1.400" /><path d="M500.500 838.700l-9.500-3.700v7.400z" fill="#dc0b0b" />
      <circle cx="449.700" cy="838.700" r="4.800" fill="#05570a" />
      <g fontFamily="Liberation Sans, sans-serif" fontSize="14.500" fill="#f3f4fa"><text x="451.500" y="798.500">Y</text><text x="453" y="838">Z</text><text x="493" y="838.500">X</text></g>
    </svg>
  );
}

const LayoutTabs = styled.div`
  display: flex;
  align-items: flex-end;
  height: 22px;
  flex: none;
  padding-left: 1px;
  border-bottom: 1px solid #d0d4ca;
  > div:nth-child(2) { background: #eef1e8; }
`;
const ViewBar = styled.div`
  display: flex;
  align-items: center;
  height: 24px;
  flex: none;
  padding: 0 1px;
`;
const ViewFrame = styled.div`
  width: 1019px;
  height: 740px;
  flex: none;
  border: 2px solid #0505ee;
  outline: 1px solid #cfd3c9;
  > svg { border: 1px solid #a4a4b8; box-sizing: content-box; }
`;
const Status = styled.div`
  display: flex;
  gap: 1px;
  height: 11px;
  margin-top: 5px;
  padding-left: 543px;
  flex: none;
`;
const Progress = styled.div`
  flex: 1;
  border: solid #c6cabf;
  border-width: 2px 0 0 1px;
`;
const Spacer = styled.div`flex: 1;`;

function CenterColumn() {
  return (
    <Col>
      <Row $h={2}><span /></Row>
      <LayoutTabs>
        <Tab $w={94} $h={23} $on>
          <svg width="15" height="14" viewBox="0 0 15 14"><path d="M1 1h13v12H1z" fill="#fefff8" stroke="#3c4844" strokeWidth="1.500" /><path d="M1 1h13v3H1z" fill="#2e3a36" /></svg>
          <Text w={45}>Layout #1</Text><CloseIcon />
        </Tab>
        <Tab $w={28} $h={19}><Text size={12}>+</Text></Tab>
      </LayoutTabs>
      <ViewBar>
        <Slot $w={22.5}><CamSmall k={0} /></Slot><Slot $w={22.5}><CamSmall k={1} /></Slot><Gap $w={6} /><Slot $w={22}><CamSmall k={2} /></Slot>
        <Sep $w={8} $h={12} /><Slot $w={18}><Text w={12} bold size={9.5} color="#73766f">2D</Text></Slot><Gap $w={1} /><Slot $w={23}><CamSmall k={3} /></Slot><Sep $w={7} $h={12} />
        {[...'abc'].map(k => <Slot key={k} $w={22.5}><Sel k={k} /></Slot>)}<Sep $w={6} $h={12} />
        {[...'defghij'].map(k => <Slot key={k} $w={22.7}><Sel k={k} /></Slot>)}<Gap $w={2} />
        {[...'lmnopqrst'].map(k => <Slot key={k} $w={22.6}><Sel k={k} /></Slot>)}
        <Spacer />
        <Text w={65} bold under>RenderView1</Text><Gap $w={9} />
        <Button $w={22} $h={20}><svg width="13" height="13" viewBox="0 0 13 13"><path d="M.5.5h12v12H.5zM6.500.5v12" fill="#dcdcf4" stroke="#8c8cb8" /></svg></Button><Gap $w={2} />
        <Button $w={22} $h={20}><svg width="13" height="13" viewBox="0 0 13 13"><path d="M.5.5h12v12H.5zM.5 6.500h12" fill="#dcdcf4" stroke="#8c8cb8" /></svg></Button><Gap $w={2} />
        <Button $w={22} $h={20}><svg width="15" height="14" viewBox="0 0 15 14"><path d="M1 1h13v12H1z" fill="#fefff8" stroke="#222b28" strokeWidth="1.500" /><path d="M1 1h13v3H1z" fill="#222b28" /></svg></Button><Gap $w={2} />
        <Button $w={22} $h={20}><CloseIcon /></Button>
      </ViewBar>
      <ViewFrame><Mesh /></ViewFrame>
      <Status><Button $w={18} $h={14}><Ico s={9}><path d="M4 4l16 16M20 4L4 20" stroke="#8d9188" strokeWidth="7" /></Ico></Button><Progress /></Status>
    </Col>
  );
}

/* ---------- right column ---------- */
const Section = styled.div<{ $mt: number }>`
  height: 13px;
  margin-top: ${p => p.$mt}px;
  flex: none;
  display: flex;
  align-items: flex-end;
  border-bottom: 1px solid #a9ada3;
`;
const TablePair = styled.div<{ $h: number; $mt: number }>`
  display: flex;
  gap: 3px;
  height: ${p => p.$h}px;
  margin-top: ${p => p.$mt}px;
  flex: none;
`;
const Table = styled.div`
  width: 290px;
  border: 1px solid #c3c7bd;
  background: #fefff8;
`;
const TableHead = styled.div`
  display: grid;
  grid-template-columns: 31px 1fr;
  height: 16px;
  align-items: center;
  justify-items: center;
  background: linear-gradient(90deg, transparent 30px, #cdd1c7 30px 31px, transparent 31px), linear-gradient(#fdfef7, #eff2e8);
  border-bottom: 1px solid #b5b9af;
`;
const Stack = styled.div<{ $gap: number }>`
  display: flex;
  flex-direction: column;
  align-items: flex-start;
  gap: ${p => p.$gap}px;
`;
const RightStatus = styled.div`
  width: 327px;
  height: 12px;
  flex: none;
  border: solid #c6cabf;
  border-width: 2px 1px 0 0;
`;
const reds = ['#f9b79d', '#f8a98c', '#f89c80', '#f58e73', '#ec8068', '#e0735c', '#e2604e', '#d95245', '#cd423d', '#c23136', '#b8182c'];

function RightColumn() {
  return (
    <Col>
      <Col $pl={7}>
        <DockTitle $w={341} $h={18}><Text w={69}>Color Map Editor</Text><FloatIcon /><CloseIcon /></DockTitle>
        <Row $h={21} $mt={7} $pl={8} $gap={2}>
          <Input $w={258} $h={20}><Text w={139} color="#7f8379">Search ... (use Esc to clear text)</Text></Input>
          <Button $w={21} $h={21} $pressed><Gear /></Button><Button $w={21} $h={21} $pressed><ColorLegend s={16} /></Button>
          <Button $w={21} $h={21}><Ico s={16}><defs>{rainbow}</defs><path d="M2 2h13v19H2z" fill="url(#rb)" /><text x="9" y="22" fontFamily="Liberation Serif, serif" fontWeight="700" fontStyle="italic" fontSize="22" fill="#111">e</text></Ico></Button>
        </Row>
        <Row $h={12} $mt={5} $pl={8}><Text w={61}>Array Name: T</Text></Row>
        <Row $h={296} $mt={5} $pl={8} $top>
          <ScrollPair $w={327} $h={296} $bar={13}>
            <ScrollBody>
              <Row $h={22} $gap={4}><Stack $gap={0}><Text w={77}>Automatic Rescale</Text><Text w={53}>Range Mode</Text></Stack><Combo $w={233}><Text w={116}>Grow and update on 'Apply'</Text><Down /></Combo></Row>
              <Row $h={12} $mt={6}><Check label="Interpret Values As Categories" w={130} /></Row>
              <Row $h={12} $mt={8}><Check label="Rescale On Visibility Change" w={118} /></Row>
              <Section $mt={9}><Text w={60} bold>Annotations</Text></Section>
              <TablePair $h={116} $mt={5}>
                <Table><TableHead><Text w={25} segoe size={11}>Value</Text><Text w={52} segoe size={11}>Annotation</Text></TableHead></Table>
                <Stack $gap={4}>
                  <Button $w={21}><Ico s={14}><path d="M12 2v20M2 12h20" stroke={B} strokeWidth="6" /></Ico></Button>
                  <Button $w={21}><Bar $w={12} $h={4} $c={B} /></Button>
                  <Button $w={21}><Swatches /></Button><Button $w={21}><Swatches eye /></Button><Button $w={21}><RedX s={11} /></Button>
                </Stack>
              </TablePair>
              <Row $h={12} $mt={6}><Check label="Enable opacity mapping for surfaces" w={153} /></Row>
              <Section $mt={9}><Text w={68} bold>Mapping Data</Text></Section>
              <TablePair $h={60} $mt={4}>
                <svg width="290" height="60" viewBox="0 0 290 60">
                  <path d="M0 0h290v60H0z" fill="#fefff8" /><path d="M8.500 7v53" stroke="#9aa9ad" strokeWidth="3.500" />
                  {reds.map((c, i) => <path key={c} d={`M${195 + i * 8.3} 60V${52.5 - i * 4.15}L${203.5 + i * 8.3} ${48.3 - i * 4.15}V60z`} fill={c} />)}
                  <path d="M192 54L286 7" stroke="#4d4a5e" strokeWidth="1.600" /><path d="M285.500 8v52" stroke="#9c8296" strokeWidth="1.500" /><circle cx="285" cy="6.500" r="4.800" fill="#d0708a" stroke="#8d8d8d" strokeWidth="1.300" />
                </svg>
                <Stack $gap={1}><Button $w={21}><Rescale s={14} /></Button><Button $w={21}><Rescale mark="eye" s={14} /></Button><Button $w={21}><Rescale s={14} /></Button></Stack>
              </TablePair>
            </ScrollBody>
            <VScroll $thumb={90}><div><Up /></div><div /><div /><div><Down /></div></VScroll>
          </ScrollPair>
        </Row>
        <Row $h={8}><span /></Row>
        <Tabs $bottom><Tab $w={91} $h={19} $on $down><Text w={70}>Color Map Editor</Text></Tab><Tab $w={83} $h={17} $down><Text w={64}>Light Inspector</Text></Tab></Tabs>
        <Dots $h={5} $pl={164} />
        <DockTitle $w={341} $h={16}><Text w={113}>Selection Display Inspector</Text><FloatIcon /><CloseIcon /></DockTitle>
        <Row $h={21} $mt={1}><Button $w={342} $h={21} $tight><Cube k={4} s={13} /><Text w={45}>Cell Labels</Text></Button></Row>
        <Row $h={21} $mt={3}><Button $w={342} $h={21}><Ico s={11}><circle cx="8" cy="11" r="4.500" fill="#d3ae3c" /></Ico><Text w={51}>Point Labels</Text></Button></Row>
        <Row $h={20} $mt={4}><Button $w={92} $left><svg width="14" height="15"><circle cx="7" cy="7.500" r="6.200" fill="#fb00f0" stroke="#5c1b60" /></svg><Text w={62}>Selection Color</Text></Button><Gap $w={205} /><Button $w={21} $off><Ico s={13}><path d="M2 9l7-6h13v9l-5 4H2z" fill="#b3b7af" /><path d="M12 14l6 8" stroke="#a9ada3" strokeWidth="2" /></Ico></Button><Gap $w={3} /><Button $w={22}><Gear s={13} /></Button></Row>
        <Row $h={20} $mt={4}><Button $w={141} $left><svg width="14" height="15"><circle cx="7" cy="7.500" r="6.200" fill="#7200f2" stroke="#2f1162" /></svg><Text w={112}>Interactive Selection Color</Text></Button><Gap $w={180} /><Button $w={22}><Gear s={13} /></Button></Row>
        <Spacer />
      </Col>
      <Spacer />
      <RightStatus />
    </Col>
  );
}

/* ---------- taskbar ---------- */
const TaskBar = styled.div`
  display: flex;
  flex-direction: column;
  background: #181a12;
  border-right: 1px solid #54564f;
  overflow: hidden;
`;
const Task = styled.div<{ $h: number; $on?: boolean; $run?: boolean }>`
  height: ${p => p.$h}px;
  flex: none;
  display: flex;
  align-items: center;
  padding-left: 19px;
  background: ${p => (p.$on ? '#454840' : 'transparent')};
`;
const RunMark = styled.div<{ $h: number }>`
  margin-left: auto;
  width: 2px;
  height: ${p => p.$h}px;
  background: #70b0ee;
`;
const Tray = styled.div<{ $h: number; $gap?: number; $pl?: number; $mt?: number }>`
  height: ${p => p.$h}px;
  margin-top: ${p => p.$mt ?? 0}px;
  flex: none;
  display: flex;
  align-items: center;
  justify-content: ${p => (p.$pl ? 'flex-start' : 'center')};
  padding-left: ${p => p.$pl ?? 0}px;
  gap: ${p => p.$gap ?? 0}px;
`;
const Clock = styled.div`
  display: flex;
  flex-direction: column;
  align-items: center;
  gap: 2px;
`;
const Line = styled.div`
  height: 4px;
  flex: none;
  border-top: 1px solid #55574f;
`;
const taskIcons: React.ReactNode[] = [
  <path d="M0 2l6-1v6H0zM7 .8L15 0v7H7zM0 8h6v6l-6-1zM7 8h8v7l-8-1z" fill="#fff" />,
  <><circle cx="7.500" cy="7.500" r="7.500" fill="#1b88d8" /><path d="M1 5Q4-1 10 .5 16 3 14.800 8.500q-2 2-5.500.8Q12 4 6.500 3.800 3 3.500 1 5z" fill="#4fca86" /><path d="M5 8q1 5 8 4-4 4-8 2.300Q1 12 1.500 8 3 4 7 5 4.500 6 5 8z" fill="#1459a4" /></>,
  <><path d="M0 1h6l1 2h8v11H0z" fill="#f7ce57" /><path d="M0 1h6l1 2H0z" fill="#d69a22" /><path d="M3 14V8h9v6h-2v-2.500H5V14z" fill="#3e96dc" /></>,
  <><path d="M4 3h3L4 12H1z" fill="#c4202c" /><path d="M8 3h3L8 12H5z" fill="#2c9440" /><path d="M12 3h3l-3 9H9z" fill="#1b5796" /></>,
  <><path d="M3.500 1.500h11v8.500h-11z" fill="#cfeaf4" stroke="#c4ccc4" /><path d="M5 6l2-2 3 4 2-2 2 1" stroke="#3d94c8" fill="none" /><path d="M0 3h3v10H0zM8 10.500h2V12h2v1.500H6V12h2z" fill="#b3bab3" /></>,
  <><path d="M3 2h12l-3 11H0z" fill="#3c68cc" /><path d="M4 4l4 3.500-5 3.500M8 11h4" stroke="#fff" strokeWidth="1.500" fill="none" /></>,
  <><path d="M1 .5h13v14H1z" fill="#84b82c" /><text x="4" y="12" fontFamily="DejaVu Sans, sans-serif" fontSize="12" fill="#28400c">λ</text></>,
  <><path d="M11 0l4 2v11l-4 2L3 8z" fill="#2a9de0" /><path d="M0 4.500L2 3.500l9 7V15zM0 10.500l2 1L11 5V0z" fill="#1a78bc" /><path d="M11 4.500v6L7 7.500z" fill="#181a12" /></>,
  <><path d="M0 .5h15v14H0z" fill="#f0443a" /><path d="M6 4l4 3.500L6 11 2.500 7.500zM9 4l4 3.500L9 11" fill="#fff" /><path d="M9.500 4l-3 3.500 3 3.500" stroke="#f0443a" fill="none" /></>,
];
const taskHeights = [27, 28, 28, 27, 28, 27, 27, 27, 28];

const menus: [string, string, string, number, number][] = [
  ['', 'F', 'ile', 15, 28], ['', 'E', 'dit', 17, 30], ['', 'V', 'iew', 22, 34], ['', 'S', 'ources', 35, 48], ['Fi', 'l', 'ters', 27, 38],
  ['', 'T', 'ools', 25, 37], ['', 'C', 'atalyst', 35, 47], ['', 'M', 'acros', 32, 45], ['', 'H', 'elp', 21, 30],
];

export default function App() {
  return (
    <>
      <Global />
      <Desktop>
        <SideBand $left />
        <Behind>
          <BehindPart $h={27} $c="#eceee8" /><BehindPart $h={35} $c="#fbfcf5" /><BehindPart $h={41} $c="#3f4139" /><BehindPart $h={52} $c="#e6eae0" />
          <BehindPart $h={53} $c="#fdfef7" $blue /><BehindPart $h={51} $c="#dfe3d9" /><BehindPart $h={1} $c="#fbfcf5" /><BehindPart $h={23} $c="#d0d4ca" /><BehindPart $h={1} $c="#fbfcf5" />
        </Behind>
        <Win>
          <TitleBar>
            <Logo /><Text w={66} segoe size={11}>ParaView 5.8.0</Text>
            <WinButtons>
              <svg width="9" height="9"><path d="M0 4.500h9" stroke="#333" /></svg>
              <svg width="9" height="9"><path d="M.5.5h8v8h-8z" fill="none" stroke="#333" /></svg>
              <svg width="9" height="9"><path d="M0 0l9 9M9 0L0 9" stroke="#333" strokeWidth="1.100" /></svg>
            </WinButtons>
          </TitleBar>
          <MenuBar>{menus.map(([a, u, b, w, s]) => <MenuItem key={u + b} $w={s}><Text w={w}>{a}<u>{u}</u>{b}</Text></MenuItem>)}</MenuBar>
          <ToolBar $h={34}>
            <Grip w={11} pad={4} />
            <Slot $w={28}><FolderOpen /></Slot><Slot $w={28}><FolderSave /></Slot><Sep $w={6} />
            <Slot $w={28}><Server /></Slot><Slot $w={28}><Server off /></Slot><Slot $w={28}><History /></Slot><Sep $w={6} />
            <Slot $w={28}><Undo /></Slot><Slot $w={28}><Undo gray /></Slot><Sep $w={5} />
            <Slot $w={28}><Extract /></Slot><Slot $w={28}><Gradient /></Slot><Slot $w={28}><Palette /></Slot><Grip />
            <Slot $w={28.5}><Shape d="M1 2h5v20H1zM23 2v20L8 12z" /></Slot>
            <Slot $w={28.5}><Shape d="M15 2v20L1 12zM17 2h5v20h-5z" /></Slot>
            <Slot $w={28}><Shape d="M5 2v20l14-10z" /></Slot>
            <Slot $w={28}><Shape d="M2 2h5v20H2zM9 2v20l14-10z" /></Slot>
            <Slot $w={28}><Shape d="M1 2v20l15-10zM18 2h5v20h-5z" /></Slot>
            <Slot $w={28}><Loop /></Slot><Grip w={14} />
            <Text w={23}>Time:</Text><Gap $w={2} /><Combo $w={59}><Text w={34}>1.1e-05</Text><Down /></Combo><Gap $w={2} />
            <Spin><Text w={10}>10</Text><SpinArrows><Up c="#a5a9a0" /><Down /></SpinArrows></Spin><Gap $w={2} /><Text w={46}>(max is 10)</Text><Grip w={16} />
            <Slot $w={28}><Camera kind="w" /></Slot><Slot $w={28}><Camera kind="p" /></Slot>
          </ToolBar>
          <ToolBar $h={35}>
            <Grip w={11} pad={4} />
            <Slot $w={28.2} $on><ColorLegend /></Slot><Slot $w={28.2}><EditMap /></Slot><Slot $w={28.2}><EditMap link /></Slot><Slot $w={28.2}><Rescale /></Slot><Slot $w={28.2}><Rescale mark="c" /></Slot><Slot $w={28.2}><Rescale mark="t" /></Slot><Slot $w={28.2}><Rescale mark="eye" /></Slot>
            <Combo $w={139} $h={21} $flat><Gap $w={6} /><Bar $w={4} $h={4} $c="#dba524" /><Gap $w={7} /><Text w={6}>T</Text><Down /></Combo><Gap $w={4} /><Combo $w={63} $h={20} $off><Down c="#9a9e95" /></Combo>
            <Grip w={15} /><Combo $w={131}><Text w={83}>Surface With Edges</Text><Down /></Combo><Grip w={16} />
            <Slot $w={28.1}><ResetCam /></Slot><Slot $w={28.1}><ZoomData /></Slot><Slot $w={28.1}><ZoomBox /></Slot>
            <Slot $w={28.1}><AxisView t="+X" up={G} side={YEL} box={RED} /></Slot><Slot $w={28.1}><AxisView t="-X" flip up={G} side={YEL} box={RED} /></Slot>
            <Slot $w={28.1}><AxisView t="+Y" flip up={G} side={RED} box={YEL} /></Slot><Slot $w={28.1}><AxisView t="-Y" up={G} side={RED} box={YEL} /></Slot>
            <Slot $w={28.1}><AxisView t="+Z" up={YEL} side={RED} box={G} /></Slot><Slot $w={28.1}><AxisView t="-Z" flip up={YEL} side={RED} box={G} /></Slot>
            <Slot $w={28.1}><Rot t="+90" /></Slot><Slot $w={28.1}><Rot t="-90" /></Slot><Grip />
            <Slot $w={28} $on><AxesEye /></Slot><Slot $w={28}><Center k={0} /></Slot><Slot $w={28}><Center k={1} /></Slot><Slot $w={28}><Center k={2} /></Slot><Grip />
          </ToolBar>
          <ToolBar $h={33} $last>
            <Grip w={11} pad={4} />
            {[<Calc />, <Contour />, <Cube />, <Cube k={1} />, <Cube k={2} />, <Cube k={3} />, <Glyph />, <Stream />, <Warp />, <Group />, <Group off />].map((n, i) => <Slot key={i} $w={28.9}>{n}</Slot>)}
            <Grip />
            {[<ExtractSel />, <PlotTime />, <PlotLine />, <PlotTime brown />, <Flake />].map((n, i) => <Slot key={i} $w={28.9}>{n}</Slot>)}
            <Grip w={15} /><Slot $w={28}><Ruler /></Slot>
          </ToolBar>
          <Body><LeftColumn /><CenterColumn /><RightColumn /></Body>
        </Win>
        <TaskBar>
          {taskIcons.map((n, i) => <Task key={i} $h={taskHeights[i]} $on={i === 3}><svg width="15" height="15" viewBox="0 0 15 15">{n}</svg>{i > 0 && <RunMark $h={i === 3 ? 27 : 20} />}</Task>)}
          <Spacer />
          <Tray $h={22} $pl={11}><svg width="6" height="11"><path d="M5.500.5l-4.500 5 4.500 5" fill="none" stroke="#ddd" strokeWidth="1.200" /></svg></Tray>
          <Tray $h={20} $gap={7}><svg width="12" height="12" fill="none" stroke="#ddd"><path d="M.5 11.500A11 11 0 0 1 11.500.5M3.500 11.500a8 8 0 0 1 8-8M6.500 11.500a5 5 0 0 1 5-5" /><circle cx="10.500" cy="10.500" r="1" fill="#ddd" /></svg><svg width="14" height="10" viewBox="0 0 14 10"><path d="M3 10Q-1 9 .5 6 1.500 4.500 3 4.500 4.500 0 8 .3 10.500.8 11 4q3 0 3 3t-3 3z" fill="#1c8ae2" /></svg></Tray>
          <Tray $h={23} $gap={7}><svg width="13" height="11" viewBox="0 0 13 11" fill="none" stroke="#ddd"><path d="M.5 3.500h2l3-3v10l-3-3h-2zM8 3.500l4 4M12 3.500l-4 4" /></svg><svg width="14" height="10" viewBox="0 0 14 10"><path d="M3 10Q-1 9 .5 6 1.500 4.500 3 4.500 4.500 0 8 .3 10.500.8 11 4q3 0 3 3t-3 3z" fill="#fff" /><path d="M7 8.500V4M5 6l2-2.200L9 6" stroke="#181a12" strokeWidth="1.400" fill="none" /></svg></Tray>
          <Tray $h={26}><Text w={20} segoe size={11.5} color="#f2f2ee">ENG</Text></Tray>
          <Tray $h={32} $mt={12}><Clock><Text w={42} segoe size={11.5} color="#f2f2ee">12:51 PM</Text><Text w={40} segoe size={11.5} color="#f2f2ee">7/5/2021</Text></Clock></Tray>
          <Tray $h={44}><svg width="15" height="15" viewBox="0 0 15 15"><path d="M0 0h15v12H9.500L7.500 15 5.500 12H0z" fill="#fff" /><path d="M3 3.500h9M3 6h9M3 8.500h5" stroke="#181a12" /></svg></Tray>
          <Line />
        </TaskBar>
        <SideBand />
      </Desktop>
    </>
  );
}
